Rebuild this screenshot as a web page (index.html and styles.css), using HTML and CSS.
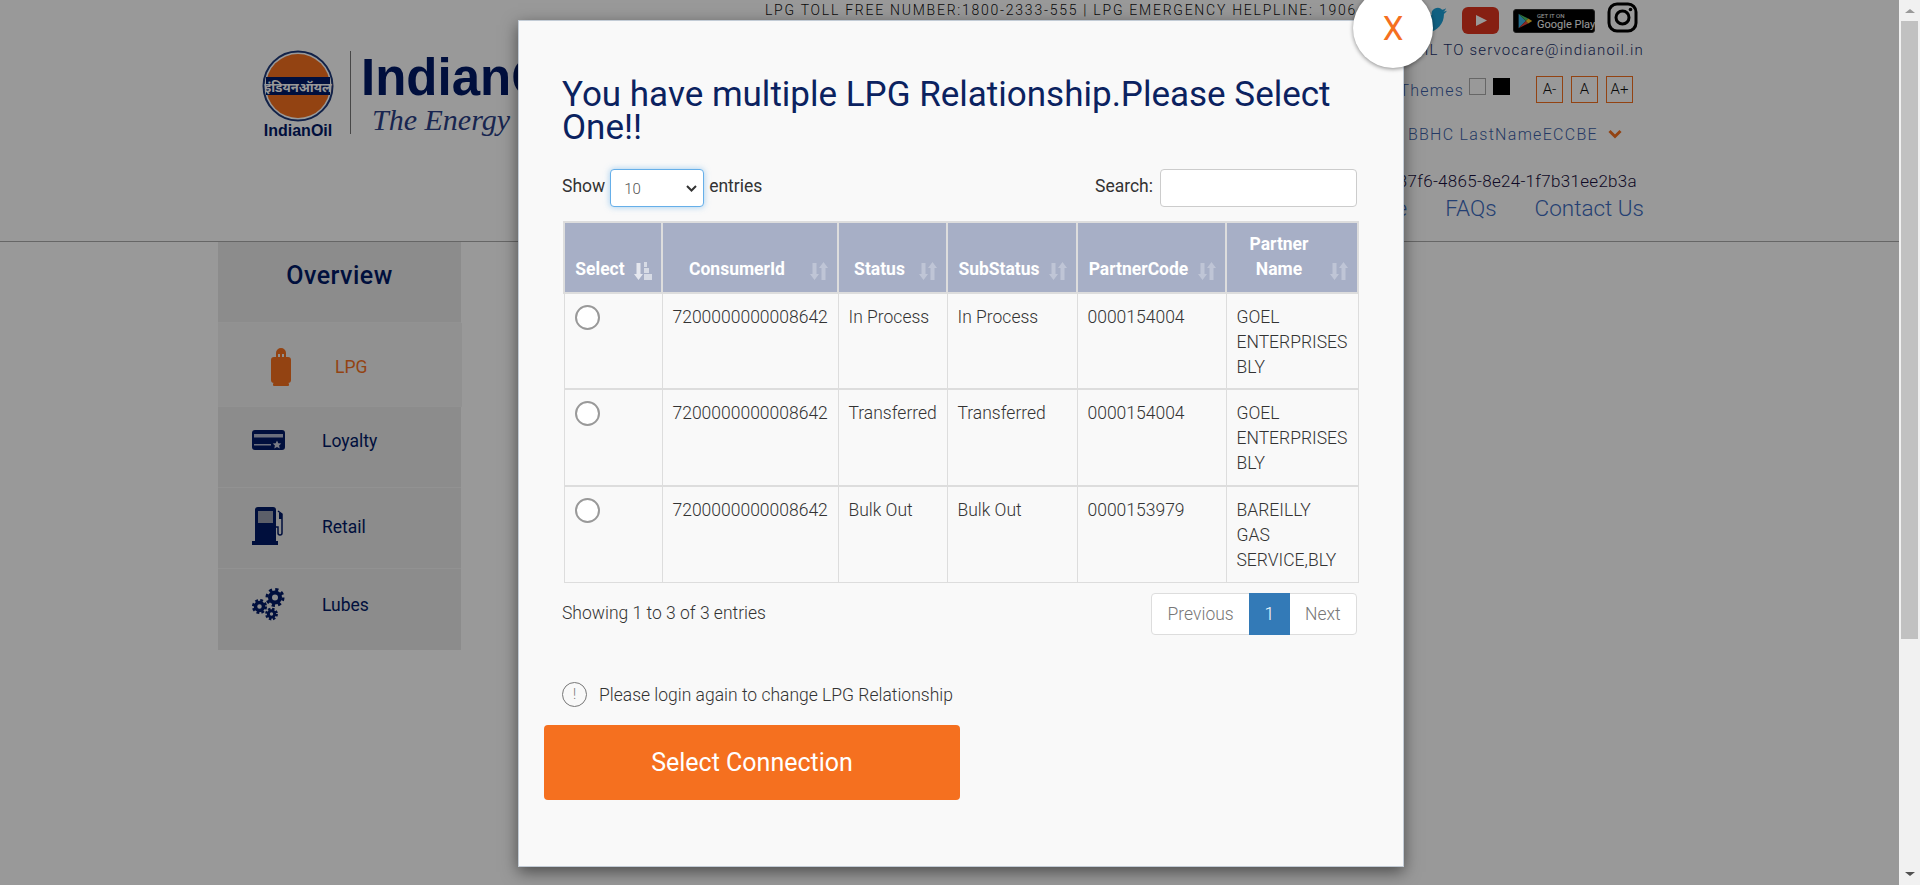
FILE: index.html
```html
<!DOCTYPE html>
<html lang="en">
<head>
<meta charset="utf-8">
<title>IndianOil LPG</title>
<link rel="stylesheet" href="styles.css">
</head>
<body>
<svg class="defs" width="0" height="0" aria-hidden="true">
  <symbol id="sort" viewBox="0 0 18 18">
    <path d="M2.500 1h4v11H9l-4.500 6L0 12h2.500zM15.500 18h-4V6H9l4.500-6L18 6h-2.500z" fill="#fff"/>
  </symbol>
  <symbol id="sort-active" viewBox="0 0 18 18">
    <path d="M2.500 1h4v11H9l-4.500 6L0 12h2.500z" fill="#fff" opacity=".7"/>
    <path d="M10 0h3v5h-3zM10 6h5v5h-5zM10 12h8v6h-8z" fill="#fff" opacity=".55"/>
  </symbol>
</svg>
<div class="app">
  <main class="page">
    <header class="site-header">
      <div class="logo">
        <div class="emblem">
          <svg width="72" height="72" viewBox="0 0 72 72">
            <circle cx="36" cy="36" r="34.500" fill="#fff" stroke="#1f3a7a" stroke-width="2"/>
            <circle cx="36" cy="36" r="32" fill="#f5701f"/>
            <rect x="4" y="27" width="64" height="18" fill="#001966"/>
            <text x="36" y="42" text-anchor="middle" class="emblem-hi">इंडियनऑयल</text>
          </svg>
          <span class="emblem-name">IndianOil</span>
        </div>
        <div class="logo-rule"></div>
        <div class="logo-word">
          <span class="logo-big">IndianOil</span>
          <span class="logo-tag">The Energy Of India</span>
        </div>
      </div>
      <div class="header-right">
        <div class="top-row">
          <span class="helpline">LPG TOLL FREE NUMBER:1800-2333-555 | LPG EMERGENCY HELPLINE: 1906</span>
          <div class="socials">
            <svg class="tw" width="36" height="30" viewBox="0 0 24 24"><path fill="#1da1d8" d="M23.950 4.570a10 10 0 0 1-2.820.770 4.960 4.960 0 0 0 2.160-2.720c-.950.560-2 .960-3.120 1.190a4.920 4.920 0 0 0-8.380 4.480C7.690 8.100 4.070 6.130 1.640 3.160a4.900 4.900 0 0 0-.670 2.480c0 1.710.870 3.210 2.190 4.100a4.900 4.900 0 0 1-2.230-.620v.060a4.920 4.920 0 0 0 3.950 4.830 4.900 4.900 0 0 1-2.210.080 4.930 4.930 0 0 0 4.600 3.420A9.870 9.870 0 0 1 0 19.540a13.940 13.940 0 0 0 7.550 2.210c9.050 0 14-7.500 14-13.980 0-.210 0-.420-.020-.630a9.940 9.940 0 0 0 2.460-2.550z"/></svg>
            <svg class="yt" width="37" height="27" viewBox="0 0 37 27"><rect width="37" height="27" rx="6" fill="#e0351f"/><path d="M14 8l11 5.500L14 19z" fill="#fff"/></svg>
            <div class="play">
              <svg width="20" height="20" viewBox="0 0 20 20"><path d="M2 1l9 9-9 9z" fill="#3bb6e8"/><path d="M2 1l12 6-3 3z" fill="#4cc26a"/><path d="M2 19l12-6-3-3z" fill="#e8453c"/><path d="M14 7l5 3-5 3-3-3z" fill="#f8c52c"/></svg>
              <span class="play-text"><small>GET IT ON</small><b>Google Play</b></span>
            </div>
            <svg class="ig" width="31" height="31" viewBox="0 0 31 31"><rect x="2" y="2" width="27" height="27" rx="8" fill="none" stroke="#000" stroke-width="3"/><circle cx="15.500" cy="15.500" r="6.500" fill="none" stroke="#000" stroke-width="3"/><circle cx="23.500" cy="7.500" r="1.800"/></svg>
          </div>
        </div>
        <div class="mail-row">EMAIL TO servocare@indianoil.in</div>
        <div class="tools-row">
          <span class="themes">Themes</span>
          <span class="swatch swatch-light"></span>
          <span class="swatch swatch-dark"></span>
          <div class="font-tools">
            <span class="font-btn">A-</span>
            <span class="font-btn">A</span>
            <span class="font-btn">A+</span>
          </div>
        </div>
        <div class="user-row">
          <span>BBHC LastNameECCBE</span>
          <svg width="14" height="10" viewBox="0 0 14 10"><path d="M1.500 2L7 7.500 12.500 2" fill="none" stroke="#f5701f" stroke-width="3"/></svg>
        </div>
        <div class="uuid-row">37f6-4865-8e24-1f7b31ee2b3a</div>
        <nav class="main-nav">
          <a>Home</a><a>FAQs</a><a>Contact Us</a>
        </nav>
      </div>
    </header>

    <aside class="sidebar">
      <h2 class="side-title">Overview</h2>
      <div class="side-item side-active">
        <svg class="side-icon" width="20" height="38" viewBox="0 0 20 38"><path d="M5 9V5a5 5 0 0 1 10 0v4h-2V6H11v3H9V6H7v3z" fill="#f5701f"/><rect y="9" width="20" height="26" rx="3" fill="#f5701f"/><rect x="2" y="35" width="16" height="3" rx="1" fill="#f5701f"/></svg>
        <span>LPG</span>
      </div>
      <div class="side-item side-loyalty">
        <svg class="side-icon" width="33" height="20" viewBox="0 0 33 20"><rect width="33" height="20" rx="3" fill="#001966"/><rect x="2" y="4" width="29" height="3.500" fill="#fff" opacity=".7"/><rect x="2" y="14" width="17" height="1.500" fill="#fff" opacity=".7"/><path d="M25 10.500l1.300 2.700 3 .4-2.200 2 .6 3-2.700-1.500-2.700 1.500.6-3-2.200-2 3-.4z" fill="#fff" opacity=".8"/></svg>
        <span>Loyalty</span>
      </div>
      <div class="side-item side-retail">
        <svg class="side-icon" width="33" height="38" viewBox="0 0 33 38"><path d="M3 3a3 3 0 0 1 3-3h15a3 3 0 0 1 3 3v31h2v4H0v-4h3z" fill="#001966"/><rect x="6" y="4" width="15" height="12" fill="#9a9fb0"/><path d="M26 4l4 3v19a2 2 0 0 1-4 0v-6h-2" fill="none" stroke="#001966" stroke-width="1.500"/><rect x="27" y="6" width="3" height="6" fill="#001966"/></svg>
        <span>Retail</span>
      </div>
      <div class="side-item side-lubes">
        <svg class="side-icon" width="33" height="33" viewBox="0 0 33 33">
          <g fill="none" stroke="#001966">
            <circle cx="23" cy="9.500" r="5" stroke-width="4"/><circle cx="23" cy="9.500" r="8" stroke-width="3" stroke-dasharray="3.200 3.080"/>
            <circle cx="7.500" cy="18.500" r="4" stroke-width="3.500"/><circle cx="7.500" cy="18.500" r="6.300" stroke-width="2.500" stroke-dasharray="2.800 2.140"/>
            <circle cx="19.500" cy="26" r="3.200" stroke-width="3"/><circle cx="19.500" cy="26" r="5.200" stroke-width="2.400" stroke-dasharray="2.400 1.680"/>
          </g>
        </svg>
        <span>Lubes</span>
      </div>
    </aside>

    <div class="overlay"></div>

    <section class="modal">
      <button class="modal-close" type="button">X</button>
      <h1 class="modal-title">You have multiple LPG Relationship.Please Select One!!</h1>
      <div class="dt-controls">
        <label class="dt-length">Show
          <span class="dt-select-wrap">
            <select class="dt-select"><option>10</option><option>25</option></select>
            <svg class="dt-chevron" width="11" height="7" viewBox="0 0 11 7"><path d="M1 1l4.500 4.500L10 1" fill="none" stroke="#333" stroke-width="2"/></svg>
          </span>
          entries</label>
        <label class="dt-search">Search: <input class="dt-input" type="text"></label>
      </div>
      <table class="dt-table">
        <colgroup>
          <col class="c-select"><col class="c-id"><col class="c-status"><col class="c-sub"><col class="c-code"><col class="c-name">
        </colgroup>
        <thead>
          <tr>
            <th>Select<svg class="sort sort-on"><use href="#sort-active"/></svg></th>
            <th>ConsumerId<svg class="sort"><use href="#sort"/></svg></th>
            <th>Status<svg class="sort"><use href="#sort"/></svg></th>
            <th>SubStatus<svg class="sort"><use href="#sort"/></svg></th>
            <th>PartnerCode<svg class="sort"><use href="#sort"/></svg></th>
            <th>Partner Name<svg class="sort"><use href="#sort"/></svg></th>
          </tr>
        </thead>
        <tbody>
          <tr>
            <td><input class="radio" type="radio" name="conn"></td>
            <td>7200000000008642</td><td>In Process</td><td>In Process</td><td>0000154004</td><td>GOEL ENTERPRISES BLY</td>
          </tr>
          <tr>
            <td><input class="radio" type="radio" name="conn"></td>
            <td>7200000000008642</td><td>Transferred</td><td>Transferred</td><td>0000154004</td><td>GOEL ENTERPRISES BLY</td>
          </tr>
          <tr>
            <td><input class="radio" type="radio" name="conn"></td>
            <td>7200000000008642</td><td>Bulk Out</td><td>Bulk Out</td><td>0000153979</td><td>BAREILLY GAS SERVICE,BLY</td>
          </tr>
        </tbody>
      </table>
      <div class="dt-footer">
        <span class="dt-info">Showing 1 to 3 of 3 entries</span>
        <div class="pager">
          <a class="pager-item">Previous</a>
          <a class="pager-item pager-current">1</a>
          <a class="pager-item">Next</a>
        </div>
      </div>
      <p class="note"><span class="note-icon">!</span>Please login again to change LPG Relationship</p>
      <button class="cta" type="button">Select Connection</button>
    </section>
  </main>
  <div class="scrollbar">
    <span class="sb-arrow sb-up"></span>
    <span class="sb-thumb"></span>
    <span class="sb-arrow sb-down"></span>
  </div>
</div>
</body>
</html>
```
FILE: styles.css
```css
* { box-sizing: border-box; }
html, body { margin: 0; height: 100%; overflow: hidden; }
body { font-family: Roboto, "Liberation Sans", sans-serif; color: #333; background: #fff; }
.defs { position: absolute; }
.app { display: flex; height: 885px; }
.page { position: relative; flex: 1; min-width: 0; overflow: hidden; background: #fff; }
.overlay { position: absolute; inset: 0; background: rgba(0, 0, 0, .4); }

/* Header */
.site-header { display: flex; justify-content: space-between; height: 242px; border-bottom: 1px solid #aaa; }
.logo { display: flex; padding: 50px 0 0 262px; align-items: flex-start; }
.emblem { display: flex; flex-direction: column; align-items: center; width: 72px; }
.emblem-hi { font-family: "Noto Sans", "DejaVu Sans", sans-serif; font-size: 13px; font-weight: 700; fill: #fff; }
.emblem-name { font: 700 16px/16px "Liberation Sans", sans-serif; color: #001966; margin-top: 1px; }
.logo-rule { width: 1px; height: 83px; background: #777; margin: 1px 10px 0 16px; }
.logo-word { display: flex; flex-direction: column; }
.logo-big { font: 700 51px/52px "Liberation Sans", sans-serif; color: #001966; margin-top: 2px; }
.logo-tag { font: italic 400 30px/34px "Liberation Serif", serif; color: #2b3f85; margin: -1px 0 0 11px; white-space: nowrap; }

.header-right { display: flex; flex-direction: column; align-items: flex-end; margin-right: 255px; }
.top-row { display: flex; align-items: flex-start; height: 38px; }
.helpline { margin-top: 1px; font-size: 14px; line-height: 18px; font-weight: 300; letter-spacing: 1.75px; color: #111; white-space: nowrap; }
.socials { display: flex; align-items: flex-start; margin-left: 57px; }
.tw { margin-top: 5px; }
.yt { margin: 7px 0 0 12px; }
.play { display: flex; align-items: center; gap: 4px; width: 82px; height: 24px; margin: 9px 0 0 14px; padding: 0 3px; background: #000; border-radius: 3px; border: 1px solid #333; }
.play svg { width: 16px; height: 16px; flex: none; }
.play-text { display: flex; flex-direction: column; color: #fff; white-space: nowrap; }
.play-text small { font-size: 6px; line-height: 7px; }
.play-text b { font-size: 11px; line-height: 11px; font-weight: 400; }
.ig { margin: 2px 6px 0 12px; }
.mail-row { font-size: 15px; line-height: 22px; font-weight: 300; letter-spacing: 1.2px; color: #1a2f6a; margin-top: 1px; }
.tools-row { display: flex; align-items: flex-start; height: 27px; margin: 15px 11px 0 0; }
.themes { margin-top: 1px; font-size: 16px; font-weight: 300; letter-spacing: 1.2px; line-height: 27px; color: #3d5fa8; }
.swatch { width: 17px; height: 17px; margin-top: 2px; }
.swatch-light { margin-left: 5px; border: 1px solid #aaa; background: #fff; }
.swatch-dark { margin-left: 7px; background: #000; }
.font-tools { display: flex; gap: 8px; margin-left: 26px; }
.font-btn { width: 27px; height: 27px; border: 1px solid #f5701f; font-size: 15px; font-weight: 300; line-height: 25px; text-align: center; color: #111; }
.user-row { display: flex; align-items: center; gap: 10px; height: 22px; margin: 20px 22px 0 0; font-size: 16px; font-weight: 300; letter-spacing: 1.3px; color: #3d5fa8; }
.uuid-row { font-size: 17px; line-height: 22px; font-weight: 300; letter-spacing: .3px; margin: 25px 7px 0 0; color: #1a1040; }
.main-nav { display: flex; gap: 38px; font-size: 22.500px; line-height: 28px; font-weight: 300; color: #3d6cc0; margin-top: 2px; }

/* Sidebar */
.sidebar { width: 243px; margin-left: 218px; }
.side-title { height: 81px; margin: 0; padding-top: 19px; background: #e9e9e9; text-align: center; font-size: 25px; line-height: 30px; font-weight: 500; letter-spacing: .5px; color: #001966; border-bottom: 1px solid #f4f4f4; }
.side-item { display: flex; align-items: flex-start; height: 81px; padding-left: 34px; background: #e9e9e9; border-bottom: 1px solid #f4f4f4; font-size: 17.500px; line-height: 22px; color: #001966; }
.side-icon { flex: none; }
.side-item span { margin-left: 37px; }
.side-active { width: 244px; height: 84px; padding: 25px 0 0 53px; background: #f2f2f2; color: #f5701f; }
.side-active span { margin: 8px 0 0 44px; }
.side-loyalty { padding-top: 23px; }
.side-loyalty span { margin-top: 0; }
.side-retail { padding-top: 19px; }
.side-retail span { margin-top: 9px; }
.side-lubes { padding-top: 19px; border-bottom: 0; }
.side-lubes span { margin-top: 6px; }

/* Modal */
.modal { position: absolute; left: 518px; top: 20px; width: 886px; height: 847px; padding: 57px 46px 0 43px; background: #f9f9f9; border: 1px solid #c3ccd6; box-shadow: 0 5px 15px rgba(0, 0, 0, .5); }
.modal-close { position: absolute; right: -30px; top: -33px; width: 80px; height: 80px; border: 0; border-radius: 50%; background: #fff; box-shadow: 0 1px 4px rgba(0, 0, 0, .45); color: #f5701f; font-family: Roboto, sans-serif; font-size: 33px; font-weight: 400; padding: 0; }
.modal-title { margin: 0; font-size: 35px; line-height: 33px; font-weight: 400; color: #0b2260; }
.dt-controls { display: flex; justify-content: space-between; height: 38px; margin-top: 25px; font-size: 17.500px; line-height: 34px; color: #333; }
.dt-length { display: flex; align-items: flex-start; gap: 5px; }
.dt-select-wrap { position: relative; display: block; width: 94px; height: 38px; }
.dt-select { display: block; appearance: none; width: 94px; height: 38px; padding: 2px 13px 0; border: 1px solid #66afe9; border-radius: 4px; background: #fff; color: #555; font: 300 15px Roboto, sans-serif; outline: 0; box-shadow: 0 0 6px rgba(102, 175, 233, .6); }
.dt-chevron { position: absolute; right: 7px; top: 16px; }
.dt-search { display: flex; align-items: flex-start; gap: 7px; }
.dt-input { width: 197px; height: 38px; border: 1px solid #ccc; border-radius: 4px; background: #fff; outline: 0; }

.dt-table { width: 794px; margin: 14px 0 0 1px; border-collapse: collapse; table-layout: fixed; font-size: 17.500px; line-height: 25px; font-weight: 300; }
.c-select { width: 98px; }
.c-id { width: 176px; }
.c-status { width: 109px; }
.c-sub { width: 130px; }
.c-code { width: 149px; }
.c-name { width: 132px; }
.dt-table th { position: relative; height: 71px; padding: 8px 36px 10px 10px; border: 2px solid #ddd; background: #a7afc6; color: #fff; font-weight: 700; text-align: center; vertical-align: bottom; }
.sort { position: absolute; right: 9px; bottom: 12px; width: 18px; height: 18px; opacity: .28; }
.sort-on { opacity: 1; }
.dt-table td { height: 95px; padding: 11px 10px 8px; border: 1px solid #ddd; vertical-align: top; background: #f9f9f9; }
.dt-table tbody tr + tr td { padding-bottom: 9px; border-top-width: 2px; }
.radio { display: block; appearance: none; width: 25px; height: 25px; margin: 0; border: 2px solid #999; border-radius: 50%; background: #fff; }

.dt-footer { display: flex; justify-content: space-between; margin-top: 10px; font-size: 17.500px; font-weight: 300; }
.dt-info { line-height: 40px; }
.pager { display: flex; height: 42px; background: #fff; border: 1px solid #ddd; border-radius: 4px; line-height: 40px; color: #777; }
.pager-item { padding: 0 15.400px; }
.pager-current { margin: -1px 0; height: 42px; background: #337ab7; color: #fff; line-height: 42px; }
.note { display: flex; align-items: center; height: 25px; margin: 47px 0 0; font-size: 17.500px; font-weight: 300; }
.note-icon { flex: none; width: 25px; height: 25px; margin-right: 12px; border: 1px solid #777; border-radius: 50%; text-align: center; line-height: 23px; font-size: 14px; color: #777; }
.cta { display: block; width: 416px; height: 75px; margin: 18px 0 0 -18px; border: 0; border-radius: 4px; background: #f5701f; color: #fff; font: 400 25px Roboto, sans-serif; }

/* Scrollbar */
.scrollbar { position: relative; width: 21px; flex: none; background: #f1f1f1; display: flex; flex-direction: column; align-items: center; }
.sb-thumb { width: 17px; height: 618px; background: #c1c1c1; margin-top: 8px; }
.sb-arrow { width: 0; height: 0; border-left: 5px solid transparent; border-right: 5px solid transparent; }
.sb-up { margin-top: 9px; border-bottom: 4px solid #999; }
.sb-down { margin-top: auto; margin-bottom: 9px; border-top: 4px solid #505050; }
```
